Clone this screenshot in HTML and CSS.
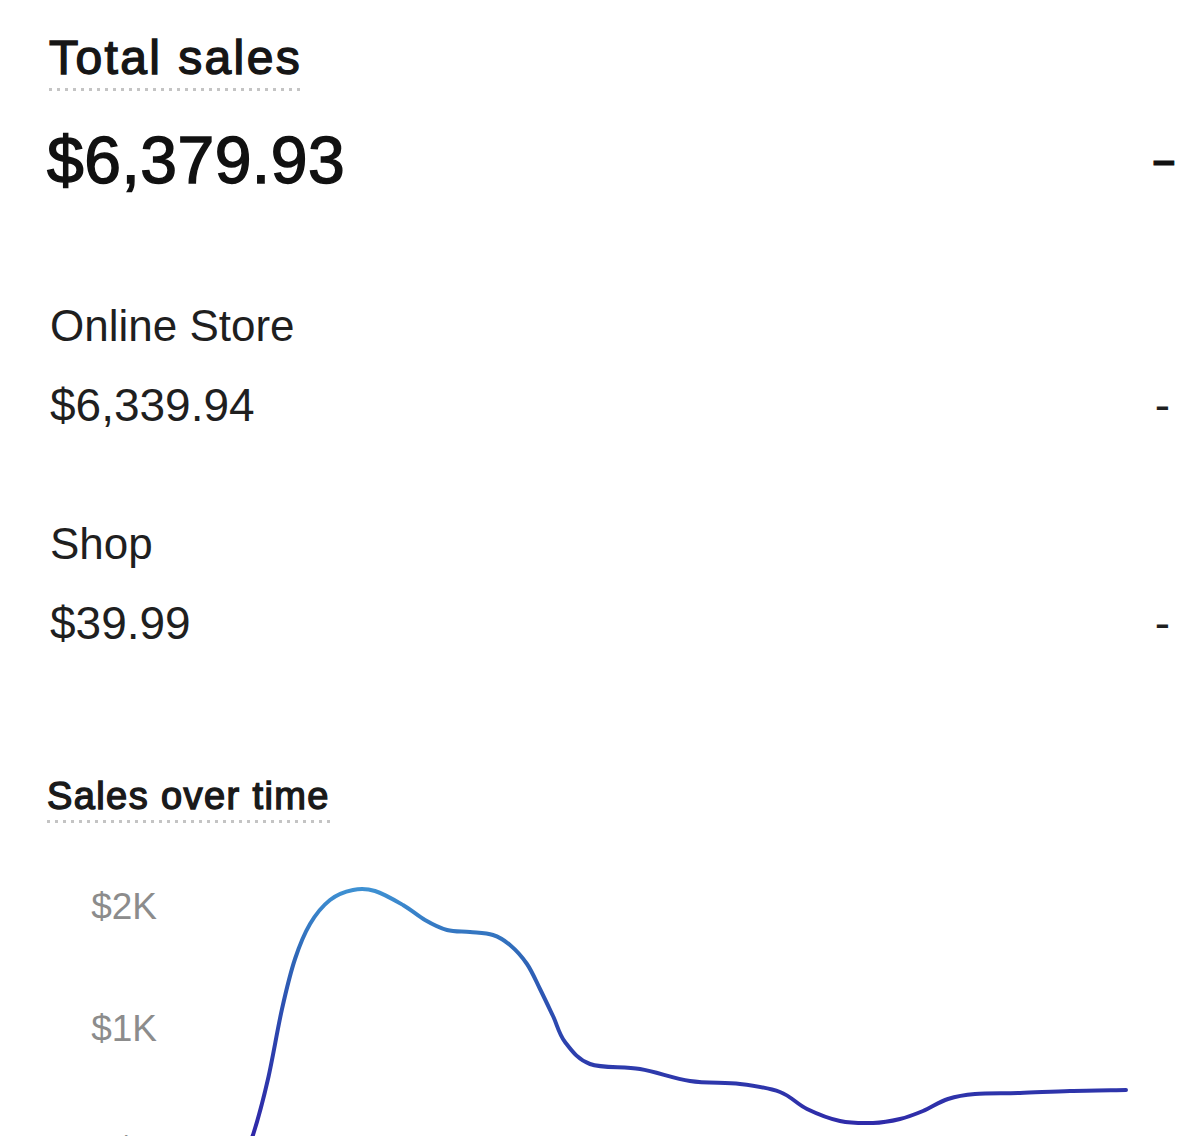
FILE: index.html
```html
<!DOCTYPE html>
<html lang="en">
<head>
<meta charset="utf-8">
<title>Total sales</title>
<link rel="stylesheet" href="styles.css">
</head>
<body>
<main class="report">
  <section class="summary">
    <h1 class="title dotted">Total sales</h1>
    <div class="total-row">
      <span class="total-amount">$6,379.93</span>
      <span class="total-change">–</span>
    </div>

    <div class="channel channel-first">
      <div class="channel-label">Online Store</div>
      <div class="channel-row">
        <span class="channel-value">$6,339.94</span>
        <span class="channel-change">-</span>
      </div>
    </div>

    <div class="channel">
      <div class="channel-label">Shop</div>
      <div class="channel-row">
        <span class="channel-value">$39.99</span>
        <span class="channel-change">-</span>
      </div>
    </div>
  </section>

  <section class="chart">
    <h2 class="chart-title dotted">Sales over time</h2>
    <svg class="chart-svg" width="1200" height="340" viewBox="0 830 1200 340" xmlns="http://www.w3.org/2000/svg">
      <defs>
        <linearGradient id="lineGrad" gradientUnits="userSpaceOnUse" x1="0" y1="886" x2="0" y2="1136">
          <stop offset="0" stop-color="#3f93d4"/>
          <stop offset="0.28" stop-color="#2f68b8"/>
          <stop offset="0.6" stop-color="#2c44ae"/>
          <stop offset="1" stop-color="#2f28a8"/>
        </linearGradient>
      </defs>
      <text class="axis-label" x="157" y="920" text-anchor="end">$2K</text>
      <text class="axis-label" x="157" y="1042" text-anchor="end">$1K</text>
      <text class="axis-label" x="157" y="1164" text-anchor="end">$0</text>
      <path class="sales-line" stroke="url(#lineGrad)" d="M 243 1160 C 246 1152, 250 1144, 253 1136
        C 257.2 1122.7, 263.2 1101, 268 1080
        C 272.8 1059, 277.5 1030, 282 1010
        C 286.5 990, 290.3 974.2, 295 960
        C 299.7 945.8, 304.2 934.8, 310 925
        C 315.8 915.2, 322.8 906.7, 330 901
        C 337.2 895.3, 345.5 892.5, 353 891
        C 360.5 889.5, 366.7 889.5, 375 892
        C 383.3 894.5, 394.7 901.2, 403 906
        C 411.3 910.8, 417.7 916.8, 425 921
        C 432.3 925.2, 439.5 929, 447 931
        C 454.5 933, 462.3 932.2, 470 933
        C 477.7 933.8, 486.3 933.8, 493 936
        C 499.7 938.2, 504.3 941.2, 510 946
        C 515.7 950.8, 522 957.7, 527 965
        C 532 972.3, 535.7 981.3, 540 990
        C 544.3 998.7, 548.8 1008.2, 553 1017
        C 557.2 1025.8, 558.8 1035, 565 1043
        C 571.2 1051, 577.5 1060.5, 590 1065
        C 602.5 1069.5, 623.3 1067.2, 640 1070
        C 656.7 1072.8, 673.3 1079.5, 690 1082
        C 706.7 1084.5, 725 1083.2, 740 1085
        C 755 1086.8, 768.8 1088.8, 780 1093
        C 791.2 1097.2, 797 1105.2, 807 1110
        C 817 1114.8, 829 1119.7, 840 1122
        C 851 1124.3, 863 1124.3, 873 1124
        C 883 1123.7, 891.7 1122, 900 1120
        C 908.3 1118, 915 1115.3, 923 1112
        C 931 1108.7, 939.3 1102.8, 948 1100
        C 956.7 1097.2, 963 1096, 975 1095
        C 987 1094, 1004.2 1094.5, 1020 1094
        C 1035.8 1093.5, 1052.3 1092.5, 1070 1092
        C 1087.7 1091.5, 1116.7 1091.2, 1126 1091"/>
    </svg>
  </section>
</main>
</body>
</html>
```

FILE: styles.css
```css
* {
  box-sizing: border-box;
}

html,
body {
  margin: 0;
  padding: 0;
  background: #ffffff;
}

body {
  font-family: "Liberation Sans", Arial, sans-serif;
  color: #141414;
  overflow: hidden;
}

.report {
  width: 1200px;
}

.summary {
  padding: 30px 25px 0 47px;
  display: flex;
  flex-direction: column;
  align-items: stretch;
}

.dotted {
  align-self: flex-start;
  padding-bottom: 5px;
  background-image: linear-gradient(to right, #c4c4c4 0, #c4c4c4 3px, transparent 3px);
  background-size: 8px 3px;
  background-repeat: repeat-x;
  background-position: left bottom;
}

.title {
  margin: 0;
  margin-left: 2px;
  font-size: 48px;
  line-height: 56px;
  font-weight: 400;
  letter-spacing: 2.4px;
  -webkit-text-stroke: 1.4px #161616;
  color: #161616;
}

.total-row {
  margin-top: 31px;
  display: flex;
  justify-content: space-between;
  align-items: flex-start;
}

.total-amount {
  font-size: 66px;
  line-height: 76px;
  font-weight: 400;
  letter-spacing: 0.5px;
  -webkit-text-stroke: 1.5px #111111;
  color: #111111;
}

.total-change {
  margin-top: 18px;
  font-size: 40px;
  line-height: 40px;
  font-weight: 700;
  -webkit-text-stroke: 1px #111111;
  color: #111111;
}

.channel {
  padding-left: 3px;
  margin-top: 87px;
  margin-right: 5px;
}

.channel-first {
  margin-top: 102px;
}

.channel-label {
  font-size: 44px;
  line-height: 52px;
  color: #1f1f1f;
}

.channel-row {
  margin-top: 27px;
  display: flex;
  justify-content: space-between;
  align-items: baseline;
}

.channel-value,
.channel-change {
  font-size: 46px;
  line-height: 52px;
  color: #1f1f1f;
}

.chart {
  margin-top: 125px;
  display: flex;
  flex-direction: column;
}

.chart-title {
  margin: 0 0 0 47px;
  font-size: 38px;
  line-height: 44px;
  font-weight: 400;
  letter-spacing: 1.4px;
  -webkit-text-stroke: 1.4px #1a1a1a;
  color: #1a1a1a;
}

.chart-svg {
  display: block;
  margin-top: 6px;
}

.axis-label {
  font-family: "Liberation Sans", Arial, sans-serif;
  font-size: 37px;
  fill: #8c8c8c;
}

.sales-line {
  fill: none;
  stroke-width: 4;
  stroke-linecap: round;
  stroke-linejoin: round;
}
```
